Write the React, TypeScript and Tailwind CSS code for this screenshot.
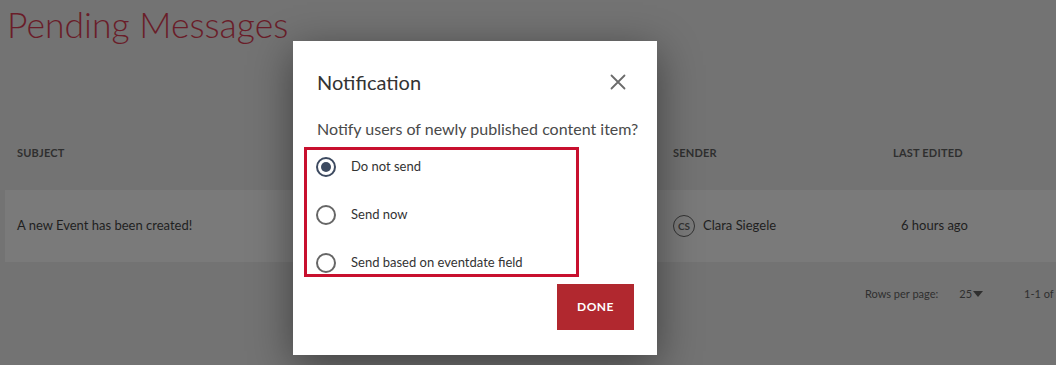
import React from "react";

export default function App() {
  return (
    <div
      className="relative w-[1056px] h-[365px] overflow-hidden bg-[#737373]"
      style={{ fontFamily: "Lato, 'Noto Sans', sans-serif" }}
    >
      <h1 className="pl-[7px] pt-[3px] text-[35.5px] leading-[44px] font-light text-[#6a1d29]">
        Pending Messages
      </h1>

      <div className="mt-[97px] grid grid-cols-[656px_220px_1fr] pl-[17px] items-center h-[18px] text-[11px] font-bold text-[#2f2f2f] tracking-[0.2px]">
        <div>SUBJECT</div>
        <div>SENDER</div>
        <div>LAST EDITED</div>
      </div>

      <div className="ml-[5px] mt-[28px] h-[72px] bg-[#7a7a7a] grid grid-cols-[656px_220px_1fr] pl-[12px] items-center text-[13px] text-[#1f1f1f]">
        <div>A new Event has been created!</div>
        <div className="flex items-center gap-[8px]">
          <div className="w-[22px] h-[22px] rounded-full border border-[#333] flex items-center justify-center text-[10px] font-bold text-[#333]">
            CS
          </div>
          <span className="text-[#1f1f1f]">Clara Siegele</span>
        </div>
        <div className="pl-[8px]">6 hours ago</div>
      </div>

      <div className="mt-[22px] flex items-center h-[20px] text-[11px] text-[#2f2f2f] pl-[865px]">
        <span className="whitespace-nowrap">Rows per page:</span>
        <span className="ml-[21px] flex items-center">
          25
          <svg width="10" height="6" viewBox="0 0 10 6" className="ml-[1px]">
            <path d="M0 0 L10 0 L5 6 Z" fill="#2f2f2f" />
          </svg>
        </span>
        <span className="ml-[41px] whitespace-nowrap">1-1 of 1</span>
      </div>

      <div className="absolute left-[293px] top-[41px] w-[364px] h-[314px] bg-white shadow-[0_10px_40px_rgba(0,0,0,0.45)]">
        <div className="flex items-center justify-between pl-[24px] pr-[31px] pt-[27px]">
          <h2 className="text-[20px] leading-[28px] text-[#333]">Notification</h2>
          <svg width="16" height="16" viewBox="0 0 16 16">
            <path d="M1.5 1.5 L14.5 14.5 M14.5 1.5 L1.5 14.5" stroke="#6b6b6b" strokeWidth="1.8" strokeLinecap="round" />
          </svg>
        </div>
        <p className="pl-[24px] mt-[21px] text-[16px] leading-[24px] text-[#4a4a4a]">
          Notify users of newly published content item?
        </p>
        <div className="ml-[11px] mt-[6px] w-[275px] h-[130px] border-[3px] border-[#c8102e] flex flex-col gap-[18px] pt-[2px]">
          {[
            { label: "Do not send", checked: true },
            { label: "Send now", checked: false },
            { label: "Send based on eventdate field", checked: false },
          ].map((o) => (
            <div key={o.label} className="flex items-center h-[30px] shrink-0 pl-[9px]">
              <div
                className={
                  o.checked
                    ? "w-[20px] h-[20px] rounded-full border-2 border-[#3d4a60] flex items-center justify-center"
                    : "w-[20px] h-[20px] rounded-full border-2 border-[#666]"
                }
              >
                {o.checked && <div className="w-[10px] h-[10px] rounded-full bg-[#3d4a60]" />}
              </div>
              <span className="ml-[15px] text-[13px] text-[#333]">{o.label}</span>
            </div>
          ))}
        </div>
        <div className="flex justify-end pr-[23px] mt-[7px]">
          <button className="w-[77px] h-[46px] bg-[#b1282f] text-white text-[12px] font-bold tracking-[0.5px]">
            DONE
          </button>
        </div>
      </div>
    </div>
  );
}
